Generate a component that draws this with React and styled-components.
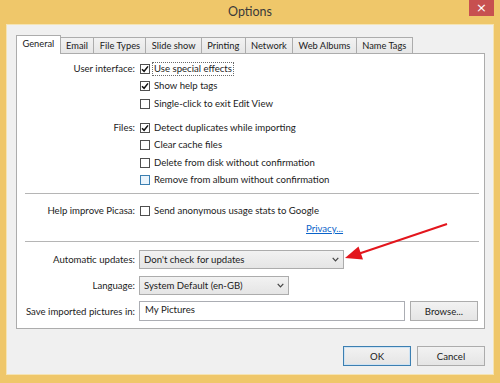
import React from 'react';
import styled, { createGlobalStyle, css } from 'styled-components';

const GlobalStyle = createGlobalStyle`
  html, body {
    margin: 0;
    padding: 0;
    background: #efc76a;
  }
  body {
    font-family: Lato, 'Open Sans', sans-serif;
    font-size: 9.6px;
    color: #1b1b1b;
  }
`;

const tabs = ['General', 'Email', 'File Types', 'Slide show', 'Printing', 'Network', 'Web Albums', 'Name Tags'];

function Check() {
  return (
    <svg width="8" height="8" viewBox="0 0 8 8">
      <path d="M1 4.2 L3.1 6.3 L7 1.4" fill="none" stroke="#111" strokeWidth="1.5" />
    </svg>
  );
}

function CheckOption({ checked, hover, focused, children }) {
  return (
    <OptionLine>
      <Box $checked={checked} $hover={hover}>
        {checked && <Check />}
      </Box>
      <OptionText $focused={focused}>{children}</OptionText>
    </OptionLine>
  );
}

function Chevron() {
  return (
    <svg width="7" height="5" viewBox="0 0 7 5">
      <path d="M0.7 0.8 L3.5 3.8 L6.3 0.8" fill="none" stroke="#444" strokeWidth="1.2" />
    </svg>
  );
}

export default function App() {
  return (
    <>
      <GlobalStyle />
      <Window>
        <TitleBar>
          <span />
          <Title>Options</Title>
          <CloseButton>×</CloseButton>
        </TitleBar>
        <Client>
          <TabStrip>
            {tabs.map((t, i) => (
              <Tab key={t} $active={i === 0}>
                {t}
              </Tab>
            ))}
          </TabStrip>
          <Panel>
            <Group>
              <FieldLabel>User interface:</FieldLabel>
              <CheckOption checked focused>
                Use special effects
              </CheckOption>
              <span />
              <CheckOption checked>Show help tags</CheckOption>
              <span />
              <CheckOption>Single-click to exit Edit View</CheckOption>
            </Group>
            <Group $gap>
              <FieldLabel>Files:</FieldLabel>
              <CheckOption checked>Detect duplicates while importing</CheckOption>
              <span />
              <CheckOption>Clear cache files</CheckOption>
              <span />
              <CheckOption>Delete from disk without confirmation</CheckOption>
              <span />
              <CheckOption hover>Remove from album without confirmation</CheckOption>
            </Group>
            <Separator />
            <Group>
              <FieldLabel>Help improve Picasa:</FieldLabel>
              <CheckOption>Send anonymous usage stats to Google</CheckOption>
              <span />
              <LinkLine>
                <Link href="#">Privacy...</Link>
              </LinkLine>
            </Group>
            <Separator />
            <Fields>
              <FieldLabel>Automatic updates:</FieldLabel>
              <Select $width={205}>
                Don't check for updates
                <Chevron />
              </Select>
              <FieldLabel>Language:</FieldLabel>
              <Select $width={150}>
                System Default (en-GB)
                <Chevron />
              </Select>
              <FieldLabel>Save imported pictures in:</FieldLabel>
              <PathLine>
                <TextBox>My Pictures</TextBox>
                <Button>Browse...</Button>
              </PathLine>
            </Fields>
          </Panel>
          <Footer>
            <Button $default>OK</Button>
            <Button>Cancel</Button>
          </Footer>
        </Client>
        <Annotation width="500" height="383" viewBox="0 0 500 383">
          <line x1="447" y1="224" x2="358" y2="254" stroke="#e3161d" strokeWidth="2" />
          <polygon points="345,258 358.5,246.5 363,259.5" fill="#e3161d" />
        </Annotation>
      </Window>
    </>
  );
}

const Window = styled.div`
  position: relative;
  width: 500px;
  height: 383px;
  background: #efc76a;
  display: flex;
  flex-direction: column;
  box-sizing: border-box;
`;

const TitleBar = styled.div`
  height: 24px;
  flex-shrink: 0;
  display: grid;
  grid-template-columns: 1fr auto 1fr;
`;

const Title = styled.div`
  font-family: Lato, 'Open Sans', sans-serif;
  font-size: 12.5px;
  color: #3a3a3a;
  line-height: 24px;
`;

const CloseButton = styled.div`
  justify-self: end;
  margin-right: 6px;
  width: 25px;
  height: 16px;
  background: #c75050;
  color: #fff;
  font-family: 'DejaVu Sans', sans-serif;
  font-size: 13px;
  line-height: 15px;
  text-align: center;
`;

const Client = styled.div`
  flex: 1;
  margin: 0 6px 8px 6px;
  border: 1px solid #f5e4b4;
  background: #f0f0f0;
  padding: 10px 8px 0 9px;
  display: flex;
  flex-direction: column;
`;

const TabStrip = styled.div`
  height: 18px;
  display: flex;
  align-items: flex-end;
  position: relative;
  z-index: 1;
`;

const Tab = styled.div`
  box-sizing: border-box;
  height: 16px;
  padding: 0 5.4px;
  margin-right: -1px;
  border: 1px solid #acacac;
  border-bottom: none;
  background: linear-gradient(#f2f2f2, #e6e6e6);
  font-size: 9.3px;
  line-height: 15px;
  white-space: nowrap;

  ${(p) =>
    p.$active &&
    css`
      height: 19px;
      margin-bottom: -1px;
      background: #fff;
      line-height: 16px;
      position: relative;
      z-index: 2;
    `}
`;

const Panel = styled.div`
  background: #fff;
  border: 1px solid #acacac;
  padding: 6px 5px 7px 8px;
  display: flex;
  flex-direction: column;
`;

const Group = styled.div`
  display: grid;
  grid-template-columns: 110px 1fr;
  column-gap: 4px;
  grid-auto-rows: 17.5px;
  align-items: center;
  margin-top: ${(p) => (p.$gap ? '6.5px' : '0')};
`;

const FieldLabel = styled.div`
  text-align: right;
  white-space: nowrap;
`;

const OptionLine = styled.div`
  display: flex;
  align-items: center;
  padding-left: 1px;
`;

const Box = styled.div`
  box-sizing: border-box;
  width: 10px;
  height: 10px;
  border: 1px solid ${(p) => (p.$hover ? '#3c7fb1' : '#4f4f4f')};
  background: ${(p) => (p.$hover ? '#eaf4fc' : '#fff')};
  display: flex;
  align-items: center;
  justify-content: center;
  margin-right: 2px;
`;

const OptionText = styled.span`
  padding: 0 1px;
  line-height: 12px;
  border: 1px dotted ${(p) => (p.$focused ? '#6a6a6a' : 'transparent')};
  white-space: nowrap;
`;

const LinkLine = styled.div`
  padding-left: 167px;
`;

const Link = styled.a`
  color: #0a63c9;
  text-decoration: underline;
`;

const Separator = styled.div`
  height: 1px;
  background: #b5b5b5;
  margin: 4px 0 8px;
`;

const Fields = styled.div`
  display: grid;
  grid-template-columns: 110px 1fr;
  column-gap: 4px;
  row-gap: 6.5px;
  align-items: center;
`;

const Select = styled.div`
  box-sizing: border-box;
  width: ${(p) => p.$width}px;
  height: 19px;
  padding: 0 4px 0 4px;
  border: 1px solid #acacac;
  background: linear-gradient(#f2f2f2, #e5e5e5);
  display: flex;
  align-items: center;
  justify-content: space-between;
`;

const PathLine = styled.div`
  display: flex;
  gap: 5px;
`;

const TextBox = styled.div`
  box-sizing: border-box;
  width: 266px;
  height: 20px;
  padding: 1px 5px;
  border: 1px solid #abadb3;
  background: #fff;
  line-height: 14px;
`;

const Button = styled.div`
  box-sizing: border-box;
  width: 68px;
  height: 20px;
  border: 1px solid ${(p) => (p.$default ? '#3c7fb1' : '#acacac')};
  background: linear-gradient(#f2f2f2, #e5e5e5);
  box-shadow: ${(p) => (p.$default ? 'inset 0 0 0 1px #cfe3f3' : 'none')};
  display: flex;
  align-items: center;
  justify-content: center;
`;

const Footer = styled.div`
  display: flex;
  justify-content: flex-end;
  gap: 6px;
  margin-top: 17px;
`;

const Annotation = styled.svg`
  position: absolute;
  inset: 0;
  pointer-events: none;
`;
